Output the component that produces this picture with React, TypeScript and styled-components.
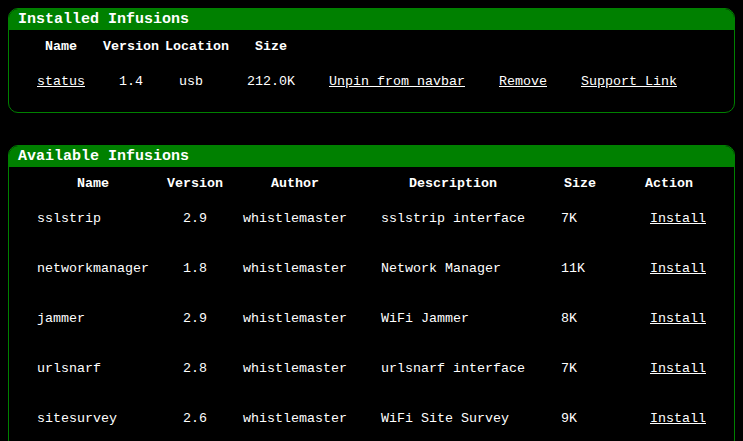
import styled, { createGlobalStyle } from "styled-components";

const GlobalStyle = createGlobalStyle`
  html, body {
    background: #000;
    overflow: hidden;
  }
  body {
    margin: 8px;
    color: #fff;
    font-family: "Liberation Mono", "Courier New", monospace;
    font-size: 13.33px;
  }
`;

type Align = "left" | "center" | "right";

interface Column {
  title: string;
  w: number;
  gap: number;
  head: Align;
  body: Align;
}

const installedCols: Column[] = [
  { title: "Name", w: 48, gap: 0, head: "center", body: "left" },
  { title: "Version", w: 56, gap: 18, head: "center", body: "center" },
  { title: "Location", w: 52, gap: 6, head: "left", body: "center" },
  { title: "Size", w: 48, gap: 30, head: "center", body: "center" },
  { title: "", w: 136, gap: 34, head: "left", body: "left" },
  { title: "", w: 48, gap: 34, head: "left", body: "left" },
  { title: "", w: 96, gap: 34, head: "left", body: "left" },
];

const availableCols: Column[] = [
  { title: "Name", w: 112, gap: 0, head: "center", body: "left" },
  { title: "Version", w: 56, gap: 18, head: "center", body: "center" },
  { title: "Author", w: 104, gap: 20, head: "center", body: "center" },
  { title: "Description", w: 144, gap: 34, head: "center", body: "left" },
  { title: "Size", w: 38, gap: 36, head: "center", body: "left" },
  { title: "Action", w: 61, gap: 46, head: "left", body: "right" },
];

const available = [
  ["sslstrip", "2.9", "whistlemaster", "sslstrip interface", "7K"],
  ["networkmanager", "1.8", "whistlemaster", "Network Manager", "11K"],
  ["jammer", "2.9", "whistlemaster", "WiFi Jammer", "8K"],
  ["urlsnarf", "2.8", "whistlemaster", "urlsnarf interface", "7K"],
  ["sitesurvey", "2.6", "whistlemaster", "WiFi Site Survey", "9K"],
];

const Panel = styled.section<{ $space?: number }>`
  border: 1px solid #008000;
  border-radius: 10px;
  overflow: hidden;
  margin-bottom: ${(p) => p.$space ?? 0}px;
`;

const PanelTitle = styled.h2`
  margin: 0;
  background: #008000;
  color: #fff;
  font-size: 15px;
  font-weight: bold;
  line-height: 17px;
  padding: 2px 10px 2px 9px;
`;

const Table = styled.div`
  display: flex;
  flex-direction: column;
  padding: 6px 0 6px 28px;
`;

const Row = styled.div<{ $h: number }>`
  display: flex;
  align-items: center;
  height: ${(p) => p.$h}px;
`;

const Cell = styled.div<{ $w: number; $gap: number; $align: Align; $bold?: boolean }>`
  flex: 0 0 ${(p) => p.$w}px;
  width: ${(p) => p.$w}px;
  margin-left: ${(p) => p.$gap}px;
  text-align: ${(p) => p.$align};
  font-weight: ${(p) => (p.$bold ? "bold" : "normal")};
  line-height: 15px;
  white-space: nowrap;
`;

const Link = styled.a`
  color: #fff;
  text-decoration: underline;
`;

const HeadRow = ({ cols }: { cols: Column[] }) => (
  <Row $h={20}>
    {cols.map((c, i) => (
      <Cell key={i} $w={c.w} $gap={c.gap} $align={c.head} $bold>
        {c.title}
      </Cell>
    ))}
  </Row>
);

const BodyRow = ({ cols, cells }: { cols: Column[]; cells: React.ReactNode[] }) => (
  <Row $h={50}>
    {cols.map((c, i) => (
      <Cell key={i} $w={c.w} $gap={c.gap} $align={c.body}>
        {cells[i]}
      </Cell>
    ))}
  </Row>
);

export default function App() {
  return (
    <>
      <GlobalStyle />
      <Panel $space={32}>
        <PanelTitle>Installed Infusions</PanelTitle>
        <Table>
          <HeadRow cols={installedCols} />
          <BodyRow
            cols={installedCols}
            cells={[
              <Link href="#">status</Link>,
              "1.4",
              "usb",
              "212.0K",
              <Link href="#">Unpin from navbar</Link>,
              <Link href="#">Remove</Link>,
              <Link href="#">Support Link</Link>,
            ]}
          />
        </Table>
      </Panel>
      <Panel>
        <PanelTitle>Available Infusions</PanelTitle>
        <Table>
          <HeadRow cols={availableCols} />
          {available.map((r) => (
            <BodyRow
              key={r[0]}
              cols={availableCols}
              cells={[...r, <Link href="#">Install</Link>]}
            />
          ))}
        </Table>
      </Panel>
    </>
  );
}
